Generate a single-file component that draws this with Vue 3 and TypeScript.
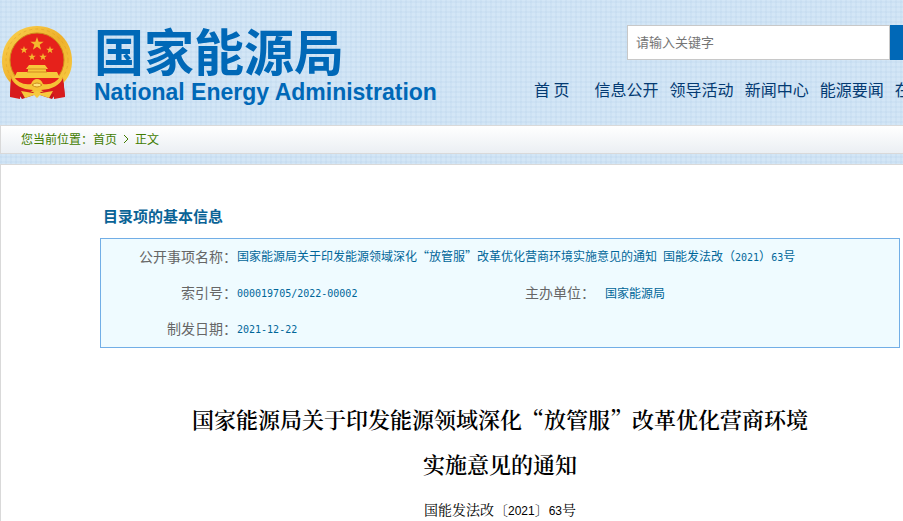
<script setup lang="ts">
const navItems: string[] = ['信息公开', '领导活动', '新闻中心', '能源要闻', '在线办事']
const stars = [
  { x: 37, y: 20, r: 7 },
  { x: 24, y: 26, r: 4 },
  { x: 50, y: 26, r: 4 },
  { x: 32, y: 33, r: 4 },
  { x: 43, y: 33, r: 4 },
]

function starPoints(x: number, y: number, r: number): string {
  return Array.from({ length: 10 }, (_, i) => {
    const radius = i % 2 ? r * 0.4 : r
    const angle = (i * Math.PI) / 5 - Math.PI / 2
    return `${(x + radius * Math.cos(angle)).toFixed(2)},${(y + radius * Math.sin(angle)).toFixed(2)}`
  }).join(' ')
}
</script>

<template>
  <div class="page">
    <header class="header">
      <a class="brand" href="#">
        <svg class="emblem" viewBox="0 0 74 78" role="img" aria-label="国徽">
          <defs>
            <linearGradient id="gold" x1="0" y1="0" x2="1" y2="1">
              <stop offset="0" stop-color="#fbd451" />
              <stop offset="0.5" stop-color="#eeb02b" />
              <stop offset="1" stop-color="#f9cf45" />
            </linearGradient>
          </defs>
          <path d="M11 52L10 73L19 71L22 75L37 70L52 75L55 71L65 73L63 52Z" fill="#c8161d" />
          <path d="M37 2C57 2 72 17 72 37C72 52 63 63 50 66L37 69L24 66C11 63 2 52 2 37C2 17 17 2 37 2Z" fill="url(#gold)" />
          <circle cx="37" cy="36" r="31" fill="none" stroke="#d99a20" stroke-dasharray="3 3" opacity=".45" />
          <circle cx="37" cy="36" r="27" fill="#e6211b" stroke="#cf8a1a" />
          <polygon v-for="(s, i) in stars" :key="i" :points="starPoints(s.x, s.y, s.r)" fill="#f4b82e" />
          <path d="M29 41H45L48 45H46V48H57L60 54H14L17 48H28V45H26Z" fill="#f7c83b" />
          <path d="M28 45H46M27 48H47" stroke="#d28b20" />
          <path d="M15 54H59L55 60Q47 64 37 64Q27 64 19 60Z" fill="#e6211b" />
          <path d="M12 51Q20 62 31 60Q33 55 37 55Q41 55 43 60Q54 62 62 51Q60 64 47 66L37 68L27 66Q14 64 12 51Z" fill="#f5c336" />
          <path d="M32 61Q37 57 42 61Q37 65 32 61Z" fill="#ffe279" stroke="#cc8b1d" />
          <path d="M11 54Q16 65 33 66L27 70L20 70L20 75L10 73ZM63 54Q58 65 41 66L47 70L54 70L54 75L65 73Z" fill="#d81c1d" />
          <path d="M21 67L33 69Q37 65 41 69L53 67L49 74L40 71L37 74L34 71L25 74Z" fill="#f6c93d" />
        </svg>
        <span class="brand-text">
          <span class="brand-cn">国家能源局</span>
          <span class="brand-en">National Energy Administration</span>
        </span>
      </a>
      <div class="tools">
        <form class="search" @submit.prevent>
          <input type="text" placeholder="请输入关键字" aria-label="请输入关键字" />
          <button type="submit" aria-label="搜索"></button>
        </form>
        <nav class="nav">
          <a class="home" href="#">首 页</a>
          <a v-for="item in navItems" :key="item" href="#">{{ item }}</a>
        </nav>
      </div>
    </header>

    <nav class="crumbs">
      <span>您当前位置：</span><a href="#">首页</a>
      <svg class="chevron" viewBox="0 0 6 10" aria-hidden="true"><path d="M1 1L5 5L1 9" /></svg>
      <span>正文</span>
    </nav>

    <main class="content">
      <section class="info">
        <h2>目录项的基本信息</h2>
        <table>
          <colgroup>
            <col class="col-label" /><col class="col-value" /><col class="col-label-2" /><col />
          </colgroup>
          <tbody>
            <tr>
              <th scope="row">公开事项名称：</th>
              <td colspan="3">国家能源局关于印发能源领域深化“放管服”改革优化营商环境实施意见的通知&ensp;国能发法改（<span class="num">2021</span>）<span class="num">63</span>号</td>
            </tr>
            <tr>
              <th scope="row">索引号：</th>
              <td><span class="num">000019705/2022-00002</span></td>
              <th scope="row">主办单位：</th>
              <td class="organ">国家能源局</td>
            </tr>
            <tr>
              <th scope="row">制发日期：</th>
              <td colspan="3"><span class="num">2021-12-22</span></td>
            </tr>
          </tbody>
        </table>
      </section>
      <article class="article">
        <h1>国家能源局关于印发能源领域深化“放管服”改革优化营商环境<br />实施意见的通知</h1>
        <p>国能发法改〔<span class="doc-num">2021</span>〕<span class="doc-num">63</span>号</p>
      </article>
    </main>
  </div>
</template>

<style>
body {
  overflow: hidden;
}
</style>

<style scoped>
.page {
  min-height: 100vh;
  display: flex;
  flex-direction: column;
  overflow: hidden;
  font-family: "Noto Sans CJK SC", sans-serif;
  font-size: 12px;
  background-color: #d3e6f6;
  background-image:
    repeating-linear-gradient(0deg, rgba(150, 185, 220, 0.1) 0 2px, transparent 2px 5px),
    repeating-linear-gradient(90deg, rgba(150, 185, 220, 0.1) 0 2px, transparent 2px 5px);
}
a {
  color: inherit;
  text-decoration: none;
}
.header {
  height: 125px;
  display: flex;
  justify-content: space-between;
}
.brand {
  display: flex;
  align-items: flex-start;
  gap: 20px;
  padding-top: 24px;
  color: #0068b7;
}
.emblem {
  width: 74px;
  height: 78px;
}
.brand-text {
  display: flex;
  flex-direction: column;
  gap: 6px;
  white-space: nowrap;
}
.brand-cn {
  font-size: 50px;
  font-weight: 700;
  line-height: 50px;
}
.brand-en {
  font-family: "Liberation Sans", sans-serif;
  font-size: 23px;
  font-weight: 700;
  line-height: 24px;
}
.tools {
  flex: 0 0 369px;
  min-width: 0;
}
.search {
  display: flex;
  height: 35px;
  margin: 25px 0 0 93px;
}
.search input {
  box-sizing: border-box;
  flex: 1;
  min-width: 0;
  padding: 0 8px 2px;
  border: 1px solid #c8c8c8;
  border-radius: 0;
  background: #fff;
  font-family: inherit;
  font-size: 13px;
}
.search input::placeholder {
  color: #757575;
}
.search button {
  width: 13px;
  padding: 0;
  border: 0;
  background: #0068b7;
}
.nav {
  display: flex;
  gap: 11px;
  margin-top: 17px;
  color: #043a72;
  font-size: 16px;
  line-height: 24px;
  white-space: nowrap;
}
.nav .home {
  margin-right: 14px;
}
.crumbs {
  box-sizing: border-box;
  display: flex;
  align-items: center;
  height: 29px;
  padding: 0 0 2px 20px;
  border: 1px solid #d9d9d9;
  border-right: 0;
  background: linear-gradient(#fff, #ebeff3);
  color: #417c00;
}
.chevron {
  width: 6px;
  height: 10px;
  margin: 0 6px;
  fill: none;
  stroke: currentColor;
}
.content {
  flex: 1;
  margin-top: 10px;
  border: 1px solid #d9d9d9;
  border-width: 1px 0 0 1px;
  background: #fff;
}
.info {
  padding: 40px 3px 0 99px;
}
.info h2 {
  margin: 0 0 11px 3px;
  color: #0a6396;
  font-size: 15px;
  line-height: 22px;
}
.info table {
  width: 100%;
  table-layout: fixed;
  border-collapse: separate;
  border-spacing: 0;
  border: 1px solid #72aee6;
  background: #effbff;
}
.col-label {
  width: 136px;
}
.col-value {
  width: 288px;
}
.col-label-2 {
  width: 70px;
}
.info th,
.info td {
  box-sizing: border-box;
  height: 36px;
  padding: 0;
  line-height: 20px;
  white-space: nowrap;
}
.info th {
  padding-bottom: 2px;
  color: #666;
  font-size: 14px;
  font-weight: 400;
  text-align: right;
}
.info td {
  color: #006699;
}
.info .organ {
  padding-left: 10px;
}
.num {
  font-family: "DejaVu Sans Mono", monospace;
  font-size: 10px;
}
.article {
  padding: 48px 3px 0 99px;
  color: #000;
  text-align: center;
}
.article h1 {
  margin: 0;
  font-family: "Noto Serif CJK SC", "Noto Sans CJK SC", serif;
  font-size: 22px;
  font-weight: 600;
  line-height: 45px;
  white-space: nowrap;
}
.article p {
  margin: 11px 0 0;
  font-family: "Noto Serif CJK SC", "Noto Sans CJK SC", serif;
  font-size: 14px;
  line-height: 24px;
}
.doc-num {
  font-family: "Liberation Sans", sans-serif;
  font-size: 12px;
}
</style>
